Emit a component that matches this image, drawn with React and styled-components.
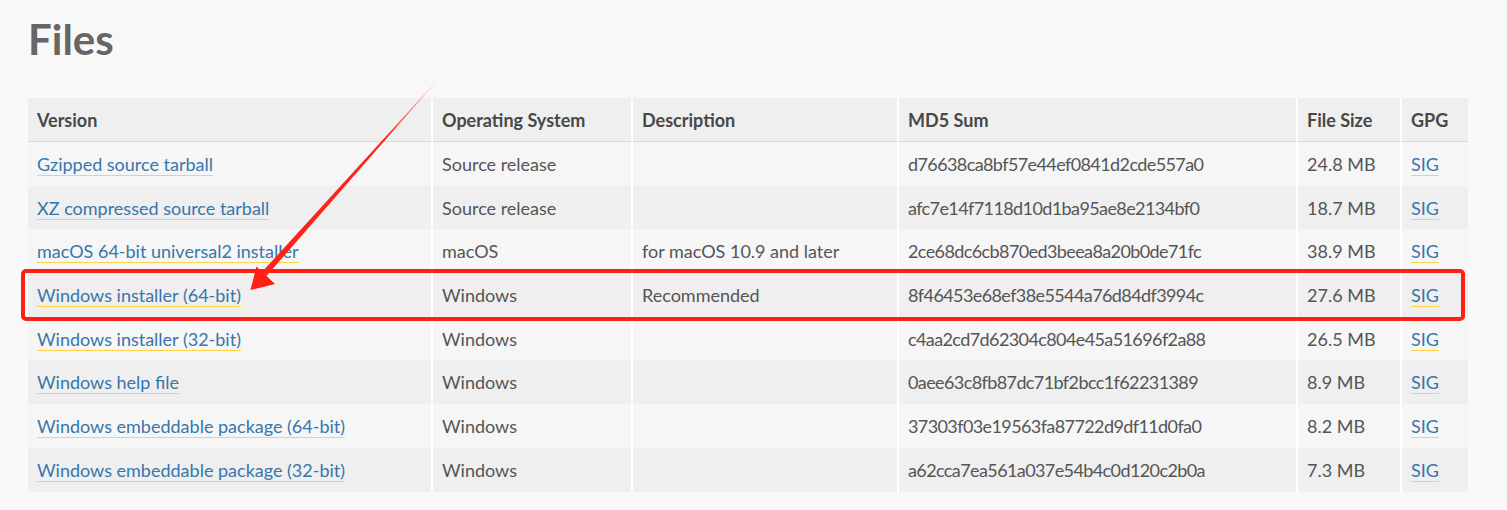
import React from 'react'
import styled, { createGlobalStyle } from 'styled-components'

const Global = createGlobalStyle`
  html, body {
    margin: 0;
    padding: 0;
    background: #f8f8f8;
  }
  body {
    font-family: Lato, "Liberation Sans", sans-serif;
    color: #555;
  }
`

const Page = styled.div`
  position: relative;
  width: 1507px;
  height: 510px;
  padding: 0 0 0 28px;
  box-sizing: border-box;
  overflow: hidden;
`

const Title = styled.h1`
  margin: 0;
  padding-top: 15px;
  height: 98px;
  box-sizing: border-box;
  font-size: 42px;
  font-weight: 700;
  line-height: 48px;
  color: #666;
`

const Table = styled.table`
  width: 1440px;
  table-layout: fixed;
  border-collapse: separate;
  border-spacing: 0;
  font-size: 18px;
`

const Th = styled.th`
  box-sizing: border-box;
  width: ${p => p.$w}px;
  height: 44px;
  padding: 0 9px;
  text-align: left;
  font-weight: 700;
  color: #484848;
  background: #efefef;
  border-bottom: 1px solid #dadada;
  border-right: ${p => (p.$last ? 'none' : '2px solid #fff')};
`

const Row = styled.tr`
  background: ${p => (p.$odd ? '#efefef' : '#f6f6f6')};
`

const Td = styled.td`
  box-sizing: border-box;
  height: 43.7px;
  padding: 0 9px;
  white-space: nowrap;
  color: #555;
  letter-spacing: ${p => (p.$hash ? '-0.6px' : 'normal')};
  border-right: ${p => (p.$last ? 'none' : '2px solid #fff')};
`

const Link = styled.a`
  color: #3776ab;
  text-decoration: none;
  border-bottom: 1px solid #ffd343;
`

const Overlay = styled.svg`
  position: absolute;
  left: 0;
  top: 0;
  pointer-events: none;
`

const columns = [
  { name: 'Version', w: 405 },
  { name: 'Operating System', w: 200 },
  { name: 'Description', w: 266 },
  { name: 'MD5 Sum', w: 399 },
  { name: 'File Size', w: 104 },
  { name: 'GPG', w: 66 },
]

const files = [
  ['Gzipped source tarball', 'Source release', '', 'd76638ca8bf57e44ef0841d2cde557a0', '24.8 MB'],
  ['XZ compressed source tarball', 'Source release', '', 'afc7e14f7118d10d1ba95ae8e2134bf0', '18.7 MB'],
  ['macOS 64-bit universal2 installer', 'macOS', 'for macOS 10.9 and later', '2ce68dc6cb870ed3beea8a20b0de71fc', '38.9 MB'],
  ['Windows installer (64-bit)', 'Windows', 'Recommended', '8f46453e68ef38e5544a76d84df3994c', '27.6 MB'],
  ['Windows installer (32-bit)', 'Windows', '', 'c4aa2cd7d62304c804e45a51696f2a88', '26.5 MB'],
  ['Windows help file', 'Windows', '', '0aee63c8fb87dc71bf2bcc1f62231389', '8.9 MB'],
  ['Windows embeddable package (64-bit)', 'Windows', '', '37303f03e19563fa87722d9df11d0fa0', '8.2 MB'],
  ['Windows embeddable package (32-bit)', 'Windows', '', 'a62cca7ea561a037e54b4c0d120c2b0a', '7.3 MB'],
]

// red highlight box + hand-drawn arrow lying over the table
const Annotation = () => (
  <Overlay width="1507" height="510" viewBox="0 0 1507 510">
    <defs>
      <linearGradient id="fade" x1="442" y1="75" x2="251" y2="289" gradientUnits="userSpaceOnUse">
        <stop offset="0" stopColor="#ff2218" stopOpacity="0.15" />
        <stop offset="0.3" stopColor="#ff2218" stopOpacity="1" />
      </linearGradient>
    </defs>
    <rect x="23" y="271" width="1440" height="48" rx="3" fill="none" stroke="#ff1f16" strokeWidth="4" />
    <polygon points="442,75 266.5,276 262,272" fill="url(#fade)" />
    <polygon points="250.5,290 256.5,266.5 275,284" fill="#ff1f16" />
  </Overlay>
)

export default function App() {
  return (
    <>
      <Global />
      <Page>
        <Title>Files</Title>
        <Table>
          <thead>
            <tr>
              {columns.map((c, i) => (
                <Th key={c.name} $w={c.w} $last={i === columns.length - 1}>{c.name}</Th>
              ))}
            </tr>
          </thead>
          <tbody>
            {files.map((f, i) => (
              <Row key={f[0]} $odd={i % 2 === 1}>
                <Td><Link href="#">{f[0]}</Link></Td>
                <Td>{f[1]}</Td>
                <Td>{f[2]}</Td>
                <Td $hash>{f[3]}</Td>
                <Td>{f[4]}</Td>
                <Td $last><Link href="#">SIG</Link></Td>
              </Row>
            ))}
          </tbody>
        </Table>
        <Annotation />
      </Page>
    </>
  )
}
